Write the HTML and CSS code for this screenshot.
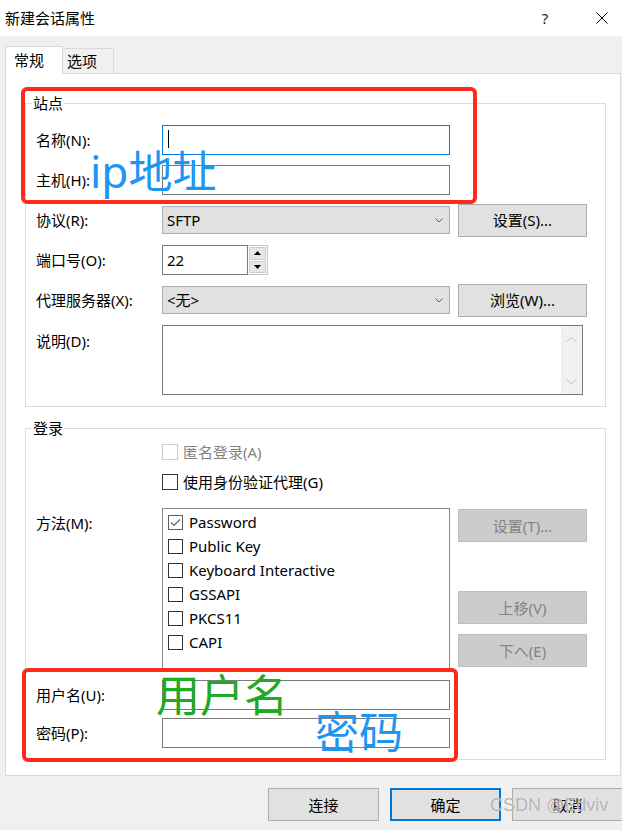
FILE: index.html
```html
<!DOCTYPE html>
<html lang="zh-CN">
<head>
<meta charset="utf-8">
<title>新建会话属性</title>
<link rel="stylesheet" href="styles.css">
</head>
<body>
<div class="titlebar">
  <span class="title">新建会话属性</span>
  <span class="help">?</span>
  <svg class="close" width="12" height="12" viewBox="0 0 12 12"><path d="M0.5 0.5 L11.5 11.5 M11.5 0.5 L0.5 11.5" stroke="#000" stroke-width="1" fill="none"/></svg>
</div>

<div class="tabs">
  <div class="tab active">常规</div>
  <div class="tab">选项</div>
</div>

<div class="panel">
  <div class="group site">
    <div class="group-title">站点</div>
    <div class="form">
      <div class="lbl">名称(N):</div>
      <div class="input focus"><span class="caret"></span></div>
      <div></div>

      <div class="lbl">主机(H):</div>
      <div class="input"></div>
      <div></div>

      <div class="lbl">协议(R):</div>
      <div class="select"><span>SFTP</span><svg width="8" height="5" viewBox="0 0 8 5"><path d="M0.5 0.5 L4 4 L7.5 0.5" stroke="#606060" fill="none"/></svg></div>
      <div class="btn">设置(S)...</div>

      <div class="lbl">端口号(O):</div>
      <div class="spin-wrap">
        <div class="input port">22</div>
        <div class="spinner">
          <div class="spin-btn"><svg width="7" height="4" viewBox="0 0 7 4"><polygon points="0,4 3.5,0 7,4" fill="#000"/></svg></div>
          <div class="spin-btn"><svg width="7" height="4" viewBox="0 0 7 4"><polygon points="0,0 3.5,4 7,0" fill="#000"/></svg></div>
        </div>
      </div>
      <div></div>

      <div class="lbl">代理服务器(X):</div>
      <div class="select"><span>&lt;无&gt;</span><svg width="8" height="5" viewBox="0 0 8 5"><path d="M0.5 0.5 L4 4 L7.5 0.5" stroke="#606060" fill="none"/></svg></div>
      <div class="btn">浏览(W)...</div>

      <div class="lbl top desc-lbl">说明(D):</div>
      <div class="memo">
        <div class="vscroll">
          <svg width="11" height="7" viewBox="0 0 11 7"><path d="M0.5 6 L5.5 1 L10.5 6" stroke="#c2c2c2" fill="none"/></svg>
          <svg width="11" height="7" viewBox="0 0 11 7"><path d="M0.5 1 L5.5 6 L10.5 1" stroke="#c2c2c2" fill="none"/></svg>
        </div>
      </div>
    </div>
  </div>

  <div class="group login">
    <div class="group-title">登录</div>
    <div class="form login-form">
      <div class="check-row first disabled"><span class="cb"></span>匿名登录(A)</div>
      <div class="check-row second"><span class="cb"></span>使用身份验证代理(G)</div>

      <div class="lbl method-lbl">方法(M):</div>
      <div class="list">
        <div class="item"><span class="cb checked"><svg width="11" height="9" viewBox="0 0 11 9"><path d="M1 4.5 L4 7.5 L10 1.5" stroke="#606060" stroke-width="1.1" fill="none"/></svg></span>Password</div>
        <div class="item"><span class="cb"></span>Public Key</div>
        <div class="item"><span class="cb"></span>Keyboard Interactive</div>
        <div class="item"><span class="cb"></span>GSSAPI</div>
        <div class="item"><span class="cb"></span>PKCS11</div>
        <div class="item"><span class="cb"></span>CAPI</div>
      </div>
      <div class="side-btns">
        <div class="btn disabled b-set">设置(T)...</div>
        <div class="btn disabled b-up">上移(V)</div>
        <div class="btn disabled b-down">下へ(E)</div>
      </div>

      <div class="lbl user-row">用户名(U):</div>
      <div class="input user-row"></div>
      <div class="user-row"></div>

      <div class="lbl pass-row">密码(P):</div>
      <div class="input pass-row"></div>
      <div class="pass-row"></div>
    </div>
  </div>
</div>

<div class="footer">
  <div class="btn fbtn">连接</div>
  <div class="btn fbtn default">确定</div>
  <div class="btn fbtn">取消</div>
</div>

<div class="mark box1"></div>
<div class="mark box2"></div>
<div class="note note-ip">ip地址</div>
<div class="note note-user">用户名</div>
<div class="note note-pass">密码</div>
<div class="watermark">CSDN @Edviv</div>
</body>
</html>
```

FILE: styles.css
```css
* { box-sizing: border-box; }

html, body {
  margin: 0;
  padding: 0;
}

body {
  width: 622px;
  height: 830px;
  overflow: hidden;
  background: #f0f0f0;
  font-family: "Noto Sans", "Noto Sans CJK SC", sans-serif;
  font-size: 15px;
  line-height: 20px;
  color: #000;
}

/* title bar */
.titlebar {
  height: 36px;
  background: #fff;
  display: flex;
  align-items: center;
  padding-left: 5px;
}
.title { flex: 1; }
.help {
  width: 12px;
  text-align: center;
  font-size: 15px;
  margin-right: 45px;
  color: #222;
}
.close { margin-right: 14px; }

/* tabs */
.tabs {
  height: 37px;
  display: flex;
  align-items: flex-end;
  padding-left: 5px;
}
.tab {
  height: 25px;
  width: 52px;
  border: 1px solid #d9d9d9;
  border-bottom: none;
  background: #f0f0f0;
  padding: 2px 0 0 4px;
  margin-left: -1px;
}
.tab.active {
  position: relative;
  height: 28px;
  width: 58px;
  margin-left: 0;
  margin-bottom: -1px;
  background: #fff;
  padding: 3px 0 0 8px;
}

/* panel */
.panel {
  margin-left: 5px;
  width: 616px;
  height: 703px;
  border: 1px solid #d9d9d9;
  background: #fff;
  padding: 29px 0 0 19px;
}

.group {
  width: 581px;
  border: 1px solid #dcdcdc;
}
.group-title {
  width: fit-content;
  margin: -11px 0 0 6px;
  padding: 0 1px;
  background: #fff;
}
.site .group-title { margin-bottom: 7px; }
.site { padding-bottom: 11px; }

.form {
  display: grid;
  grid-template-columns: 118px 288px 129px;
  column-gap: 8px;
  padding-left: 10px;
}
.site .form {
  grid-template-rows: repeat(5, 40px) auto;
  align-items: center;
}
.site .form > .desc-lbl,
.site .form > .memo { align-self: start; }

.lbl { white-space: nowrap; }
.desc-lbl { margin-top: 11px; }

.input {
  height: 30px;
  width: 288px;
  border: 1px solid #7a7a7a;
  background: #fff;
  padding: 4px 0 0 5px;
}
.input.focus { border-color: #0078d7; }
.caret {
  display: block;
  width: 1px;
  height: 18px;
  margin-top: 0;
  background: #000;
}

.select {
  height: 28px;
  width: 288px;
  border: 1px solid #adadad;
  background: #e1e1e1;
  display: flex;
  align-items: center;
  justify-content: space-between;
  padding: 0 6px 0 4px;
}

.btn {
  height: 33px;
  width: 129px;
  border: 1px solid #adadad;
  background: #e1e1e1;
  display: flex;
  align-items: center;
  justify-content: center;
}
.btn.disabled {
  background: #cccccc;
  border-color: #bfbfbf;
  color: #838383;
}

.spin-wrap { display: flex; }
.input.port { width: 86px; padding-left: 4px; }
.spinner {
  width: 20px;
  height: 30px;
  border: 1px solid #c4c4c4;
  border-left: none;
  padding: 1px;
  display: flex;
  flex-direction: column;
  gap: 1px;
  background: #fff;
}
.spin-btn {
  flex: 1;
  background: #e6e6e6;
  border: 1px solid #cfcfcf;
  display: flex;
  align-items: center;
  justify-content: center;
}

.memo {
  grid-column: 2 / -1;
  width: 421px;
  height: 70px;
  margin-top: 5px;
  border: 1px solid #7a7a7a;
  background: #fff;
  display: flex;
  justify-content: flex-end;
}
.vscroll {
  width: 21px;
  background: #f0f0f0;
  display: flex;
  flex-direction: column;
  align-items: center;
  justify-content: space-between;
  padding: 10px 0 9px;
}

/* login group */
.login {
  margin-top: 21px;
  padding-bottom: 11px;
}
.login .group-title { margin-bottom: 2px; }

.check-row {
  grid-column: 2 / -1;
  height: 24px;
  display: flex;
  align-items: center;
  gap: 5px;
}
.check-row.second { margin-top: 6px; }
.check-row.disabled { color: #838383; }

.cb {
  width: 15px;
  height: 15px;
  border: 1px solid #333;
  background: #fff;
  display: inline-flex;
  align-items: center;
  justify-content: center;
  flex: none;
}
.check-row .cb { width: 16px; height: 16px; }
.check-row.disabled .cb { border-color: #cccccc; }
.cb.checked { border-color: #606060; }

.method-lbl { margin-top: 19px; align-self: start; }
.list {
  margin-top: 14px;
  height: 162px;
  border: 1px solid #828790;
  padding: 1px 0 0 5px;
}
.item {
  height: 24px;
  display: flex;
  align-items: center;
  gap: 6px;
}
.side-btns {
  margin-top: 14px;
  display: flex;
  flex-direction: column;
}
.b-set { margin-top: 1px; }
.b-up { margin-top: 49px; }
.b-down { margin-top: 10px; }

.user-row { margin-top: 10px; align-self: center; }
.pass-row { margin-top: 8px; align-self: center; }

/* footer */
.footer {
  display: flex;
  gap: 11px;
  padding-left: 268px;
  margin-top: 12px;
}
.fbtn { width: 111px; flex: none; }
.fbtn.default { border: 2px solid #0078d7; }

/* annotations (overlaid on the screenshot) */
.mark {
  position: absolute;
  border: 4px solid #ff2a1f;
  border-radius: 6px;
}
.box1 { left: 21px; top: 87px; width: 456px; height: 117px; }
.box2 { left: 22px; top: 668px; width: 436px; height: 94px; }

.note {
  position: absolute;
  font-family: "Noto Sans CJK SC", sans-serif;
  font-size: 44px;
  line-height: 44px;
  white-space: nowrap;
}
.note-ip { left: 90px; top: 149px; color: #1e96f0; font-family: "Noto Sans", "Noto Sans CJK SC", sans-serif; }
.note-user { left: 156px; top: 671px; color: #22a822; }
.note-pass { left: 315px; top: 708px; color: #1e96f0; }

.watermark {
  position: absolute;
  left: 490px;
  top: 794px;
  font-family: "Liberation Sans", sans-serif;
  font-size: 18px;
  line-height: 22px;
  color: rgba(160, 160, 160, 0.8);
  text-shadow: 0 0 1px #fff;
  white-space: nowrap;
}
```
